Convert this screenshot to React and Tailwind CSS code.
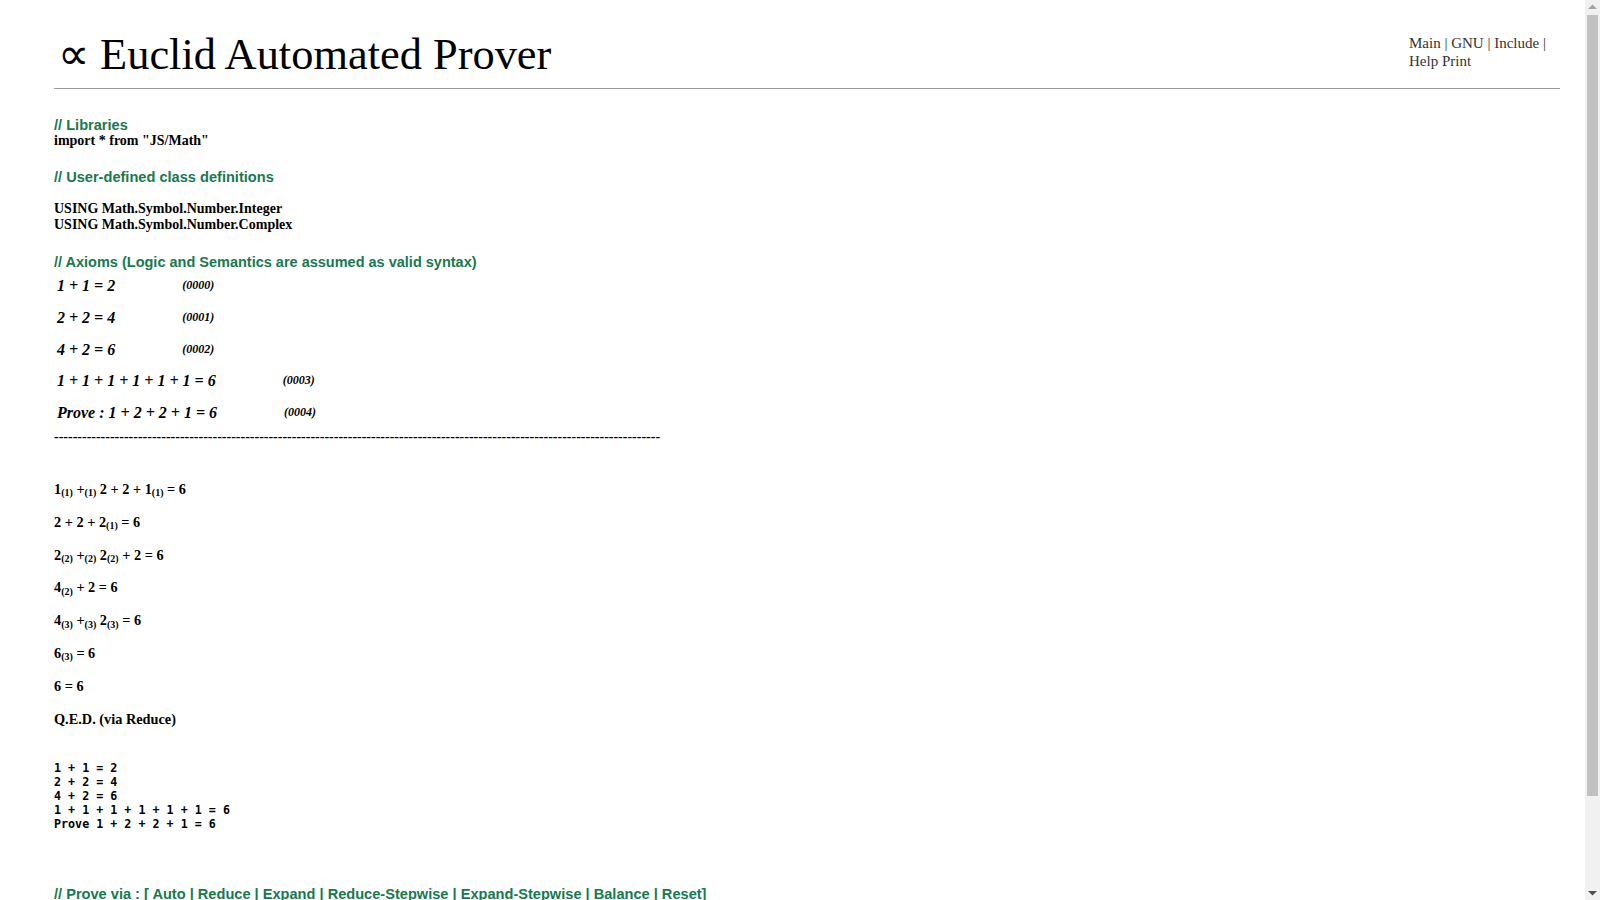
export default function App() {
  const green = "text-[#18794e]";
  const serif = "font-['Liberation_Serif',serif]";
  const sans = "font-['Liberation_Sans',Arial,sans-serif]";
  const axioms = [
    ["1 + 1 = 2", "(0000)"],
    ["2 + 2 = 4", "(0001)"],
    ["4 + 2 = 6", "(0002)"],
    ["1 + 1 + 1 + 1 + 1 + 1 = 6", "(0003)"],
    ["Prove : 1 + 2 + 2 + 1 = 6", "(0004)"],
  ];
  const S = ({ children }) => <sub className="text-[10px]">{children}</sub>;
  const steps = [
    <>1<S>(1)</S> +<S>(1)</S> 2 + 2 + 1<S>(1)</S> = 6</>,
    <>2 + 2 + 2<S>(1)</S> = 6</>,
    <>2<S>(2)</S> +<S>(2)</S> 2<S>(2)</S> + 2 = 6</>,
    <>4<S>(2)</S> + 2 = 6</>,
    <>4<S>(3)</S> +<S>(3)</S> 2<S>(3)</S> = 6</>,
    <>6<S>(3)</S> = 6</>,
    <>6 = 6</>,
    <>Q.E.D. (via Reduce)</>,
  ];
  return (
    <div className={`min-h-[1000px] bg-white pl-[54px] ${serif} text-black`}>
      <div className="w-[1506px]">
        <div className="flex justify-between">
          <h1 className="pt-[30px] pl-[4px] text-[44.4px] leading-[48px] font-normal whitespace-nowrap">
            ∝ Euclid Automated Prover
          </h1>
          <div className="w-[151px] pt-[34px] text-[15px] leading-[18px] text-[#333]">
            Main | GNU | Include | Help Print
          </div>
        </div>
        <div className="mt-[10px] h-px bg-[#9a9a9a]" />
      </div>

      <div className={`mt-[28px] ${sans} ${green} text-[14.6px] leading-[16px] font-bold`}>// Libraries</div>
      <div className="text-[14px] leading-[16px] font-bold">import * from "JS/Math"</div>

      <div className={`mt-[20px] ${sans} ${green} text-[14.6px] leading-[16px] font-bold`}>// User-defined class definitions</div>
      <div className="mt-[16px] text-[14px] leading-[16px] font-bold">
        <div>USING Math.Symbol.Number.Integer</div>
        <div>USING Math.Symbol.Number.Complex</div>
      </div>

      <div className={`mt-[21px] ${sans} ${green} text-[14.5px] leading-[16px] font-bold`}>// Axioms (Logic and Semantics are assumed as valid syntax)</div>
      <div className="pl-[3px]">
        {axioms.map(([eq, lbl]) => (
          <div key={lbl} className="flex items-start gap-[67px] leading-[31.8px] italic font-bold">
            <span className="text-[16px]">{eq}</span>
            <span className="text-[12px]">{lbl}</span>
          </div>
        ))}
      </div>
      <div className="text-[14px] leading-[16px] font-bold whitespace-nowrap">
        {"-".repeat(130)}
      </div>

      <div className="mt-[36px] text-[14.3px] font-bold">
        {steps.map((s, i) => (
          <div key={i} className="h-[32.8px] leading-[16px] whitespace-nowrap">{s}</div>
        ))}
      </div>

      <pre className="mt-[18px] font-['DejaVu_Sans_Mono',monospace] text-[11.7px] leading-[14px] font-bold">
{`1 + 1 = 2
2 + 2 = 4
4 + 2 = 6
1 + 1 + 1 + 1 + 1 + 1 = 6
Prove 1 + 2 + 2 + 1 = 6`}
      </pre>

      <div className={`mt-[54px] ${sans} ${green} text-[14.6px] leading-[18px] font-bold whitespace-nowrap`}>
        // Prove via : [ Auto | Reduce | Expand | Reduce-Stepwise | Expand-Stepwise | Balance | Reset]
      </div>

      <div className="fixed top-0 right-0 h-screen w-[15px] bg-[#f1f1f1]">
        <svg className="absolute top-[4px] left-[3px]" width="9" height="6" viewBox="0 0 9 6">
          <path d="M0 5 L4.5 0.5 L9 5 Z" fill="#a3a3a3" />
        </svg>
        <div className="absolute top-[15px] left-[2px] h-[781px] w-[11px] bg-[#c1c1c1]" />
        <svg className="absolute bottom-[4px] left-[3px]" width="9" height="6" viewBox="0 0 9 6">
          <path d="M0 1 L4.5 5.5 L9 1 Z" fill="#505050" />
        </svg>
      </div>
    </div>
  );
}
